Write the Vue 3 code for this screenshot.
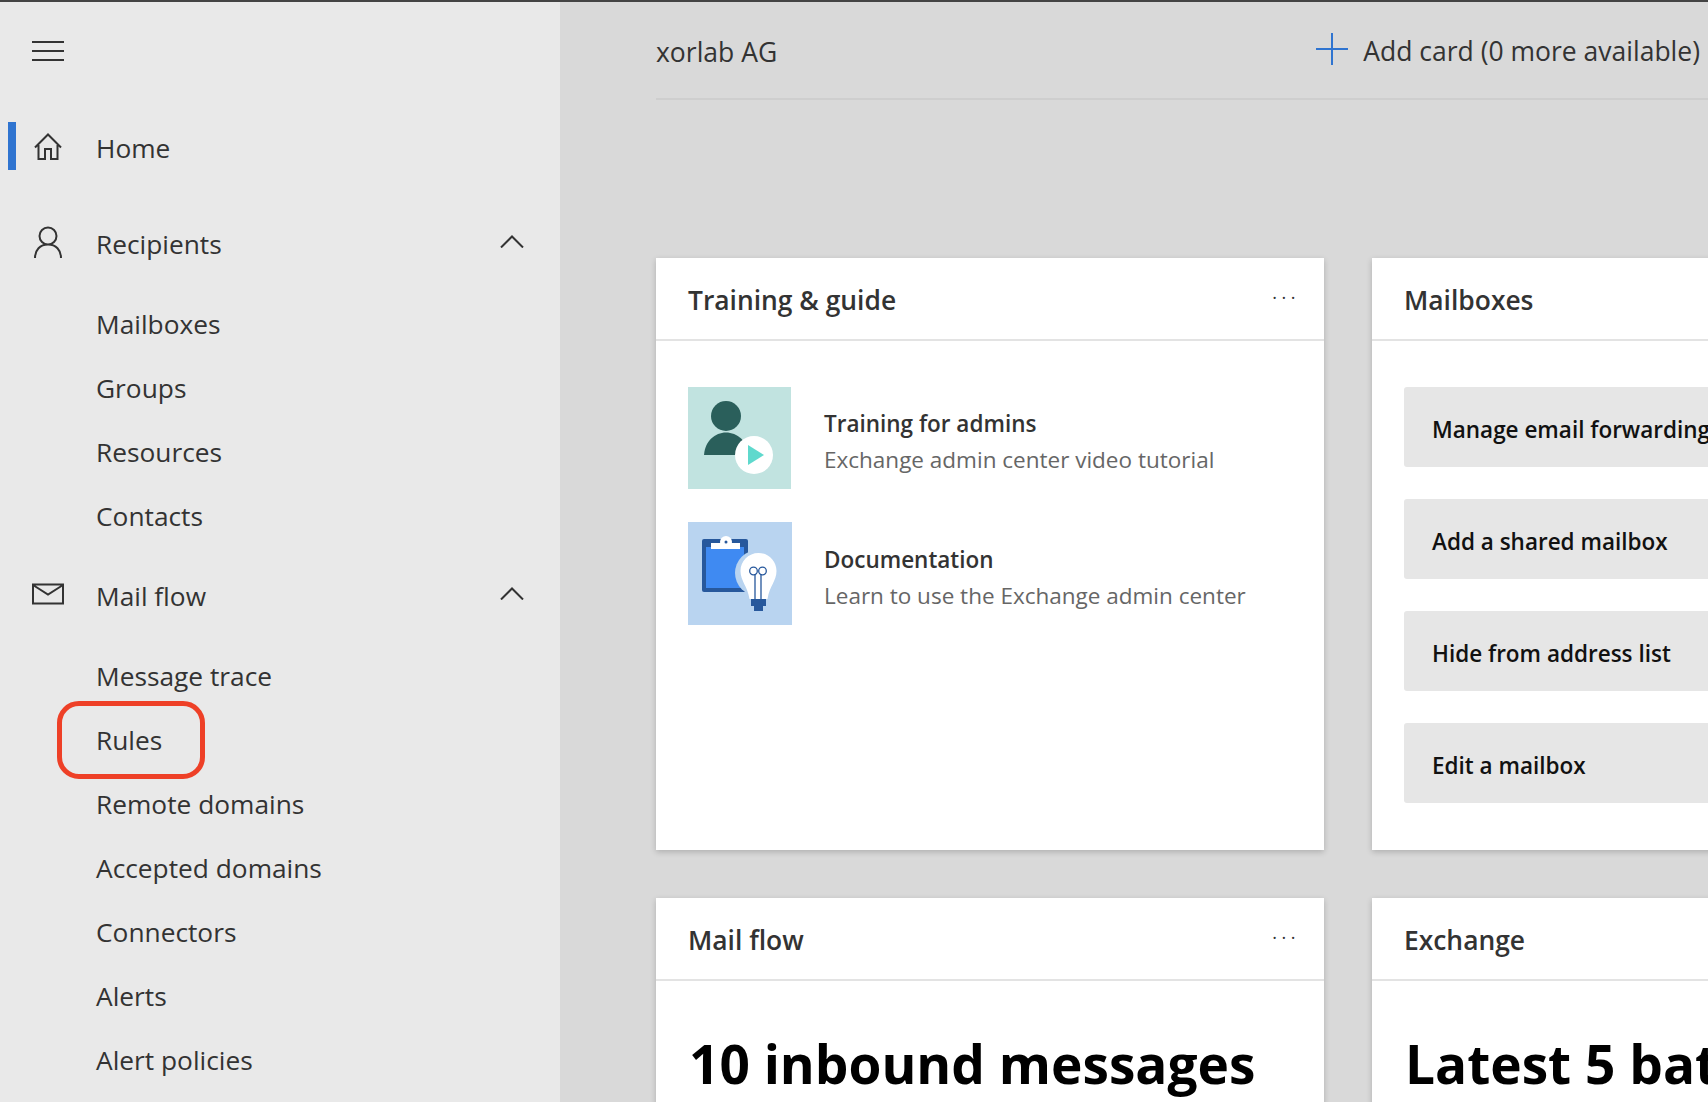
<template>
  <div class="page">
    <aside class="sidebar">
      <button class="hamburger" type="button" aria-label="Menu">
        <span /><span /><span />
      </button>

      <nav class="nav">
        <div v-for="group in navGroups" :key="group.label" class="nav-group">
          <div class="nav-head">
            <span class="nav-marker" :class="{ 'nav-marker--active': group.active }" />
            <svg class="nav-icon" viewBox="0 0 32 32" fill="none" stroke="#333" stroke-width="2">
              <path v-if="group.icon === 'home'" d="M3 17.5 16 4.500l13 13M6.500 15v14h6.500V19h6v10h6.500V15" />
              <path v-else-if="group.icon === 'person'" d="M16 18.500a8.500 8.500 0 1 0 0-17 8.500 8.500 0 0 0 0 17ZM3 32C3 24 8 18.500 16 18.500S29 24 29 32" />
              <path v-else d="M1 6.500h30v19H1zM1 7l15 9.500L31 7" />
            </svg>
            <span class="nav-label">{{ group.label }}</span>
            <svg v-if="group.items" class="nav-chevron" viewBox="0 0 24 13" fill="none" stroke="#333" stroke-width="2">
              <path d="M1 12.500 12 1.500l11 11" />
            </svg>
          </div>
          <div v-for="item in group.items" :key="item" class="nav-sub">
            {{ item }}
            <span v-if="item === 'Rules'" class="nav-highlight" />
          </div>
        </div>
      </nav>
    </aside>

    <main class="main">
      <header class="topbar">
        <span class="org">xorlab AG</span>
        <span class="add-card">
          <svg class="add-icon" viewBox="0 0 32 32" fill="none" stroke="#2f74d0" stroke-width="2">
            <path d="M16 0v32M0 16h32" />
          </svg>
          Add card (0 more available)
        </span>
      </header>

      <section class="cards">
        <article class="card">
          <div class="card-head">
            <h2>Training &amp; guide</h2>
            <span class="more">···</span>
          </div>
          <div class="card-body training">
            <div class="guide">
              <svg class="thumb" viewBox="0 0 103 102">
                <rect width="103" height="102" fill="#c1e3e0" />
                <circle cx="38" cy="29" r="15" fill="#2a5f5b" />
                <path d="M16 68c1-14 11-22.500 22-22.500S60 54 60 68Z" fill="#2a5f5b" />
                <circle cx="66" cy="68" r="19" fill="#fff" />
                <path d="M60 58v20l16-10Z" fill="#5fd9cd" />
              </svg>
              <div class="guide-text">
                <div class="guide-title">Training for admins</div>
                <div class="guide-sub">Exchange admin center video tutorial</div>
              </div>
            </div>
            <div class="guide">
              <svg class="thumb thumb--doc" viewBox="0 0 104 103">
                <rect width="104" height="103" fill="#b9d4f0" />
                <rect x="14" y="17" width="46" height="53" rx="2" fill="#27589c" />
                <rect x="18" y="25" width="38" height="41" fill="#3f8af2" />
                <circle cx="38" cy="20" r="6" fill="#fff" />
                <rect x="23" y="21" width="29" height="6" fill="#fff" />
                <circle cx="38" cy="20" r="1.500" fill="#27589c" />
                <circle cx="70" cy="51" r="23" fill="#b9d4f0" />
                <path d="M70.500 31c10 0 18 8 18 18 0 10-7 15-9 28h-18c-2-13-9-18-9-28 0-10 8-18 18-18Z" fill="#fff" />
                <path d="M67 77V52M73 77V52" fill="none" stroke="#27589c" stroke-width="1.300" />
                <circle cx="65.500" cy="49" r="3.800" fill="none" stroke="#27589c" stroke-width="1.300" />
                <circle cx="74.500" cy="49" r="3.800" fill="none" stroke="#27589c" stroke-width="1.300" />
                <path d="M63 77h15v7h-3v5h-9v-5h-3Z" fill="#27589c" />
              </svg>
              <div class="guide-text">
                <div class="guide-title">Documentation</div>
                <div class="guide-sub">Learn to use the Exchange admin center</div>
              </div>
            </div>
          </div>
        </article>

        <article class="card">
          <div class="card-head">
            <h2>Mailboxes</h2>
          </div>
          <div class="card-body actions">
            <div v-for="action in mailboxActions" :key="action" class="action">{{ action }}</div>
          </div>
        </article>

        <article class="card">
          <div class="card-head">
            <h2>Mail flow</h2>
            <span class="more">···</span>
          </div>
          <div class="card-body stat">10 inbound messages</div>
        </article>

        <article class="card">
          <div class="card-head">
            <h2>Exchange</h2>
          </div>
          <div class="card-body stat">Latest 5 batches</div>
        </article>
      </section>
    </main>
  </div>
</template>

<script setup>
const navGroups = [
  { label: "Home", icon: "home", active: true },
  { label: "Recipients", icon: "person", items: ["Mailboxes", "Groups", "Resources", "Contacts"] },
  {
    label: "Mail flow",
    icon: "mail",
    items: ["Message trace", "Rules", "Remote domains", "Accepted domains", "Connectors", "Alerts", "Alert policies"],
  },
]

const mailboxActions = [
  "Manage email forwarding",
  "Add a shared mailbox",
  "Hide from address list",
  "Edit a mailbox",
]
</script>

<style>
html, body {
  margin: 0;
  overflow: hidden;
}
</style>

<style scoped>
.page {
  display: flex;
  box-sizing: border-box;
  height: 1102px;
  overflow: hidden;
  border-top: 2px solid #444;
  background: #d9d9d9;
  color: #333;
  font-family: "Open Sans", "Noto Sans", sans-serif;
}

.sidebar {
  flex: 0 0 560px;
  background: #e9e9e9;
}
.hamburger {
  display: flex;
  flex-direction: column;
  gap: 7px;
  width: 32px;
  margin: 39px 0 0 32px;
  padding: 0;
  border: 0;
  background: none;
}
.hamburger span {
  height: 2px;
  background: #333;
}

.nav {
  margin-top: 53px;
}
.nav-group + .nav-group {
  margin-top: 16px;
}
.nav-group:first-child {
  margin-bottom: 32px;
}
.nav-head {
  display: flex;
  align-items: center;
  height: 64px;
  margin-bottom: 16px;
  padding: 0 36px 0 8px;
}
.nav-group:first-child .nav-head {
  margin-bottom: 0;
}
.nav-marker {
  width: 8px;
  height: 48px;
  margin-right: 16px;
}
.nav-marker--active {
  background: #2f74d0;
}
.nav-icon {
  width: 32px;
  height: 32px;
  margin-right: 32px;
  overflow: visible;
}
.nav-label {
  padding-top: 4px;
  font-size: 26.3px;
}
.nav-chevron {
  width: 24px;
  height: 13px;
  margin: -2px 0 0 auto;
}
.nav-sub {
  position: relative;
  box-sizing: border-box;
  height: 64px;
  padding: 2px 0 0 96px;
  font-size: 26.3px;
  line-height: 64px;
}
.nav-highlight {
  position: absolute;
  top: -5px;
  left: 57px;
  box-sizing: border-box;
  width: 148px;
  height: 78px;
  border: 5px solid #ee4027;
  border-radius: 22px;
}

.main {
  flex: 1;
  min-width: 0;
  padding-left: 96px;
}
.topbar {
  display: flex;
  align-items: center;
  justify-content: space-between;
  height: 96px;
  padding-right: 8px;
  border-bottom: 2px solid #cecece;
  font-size: 26.5px;
}
.org {
  padding-top: 4px;
}
.add-card {
  display: flex;
  align-items: center;
  gap: 15px;
  padding-top: 2px;
  white-space: nowrap;
}
.add-icon {
  width: 32px;
  height: 32px;
  margin-top: -4px;
}

.cards {
  display: grid;
  grid-template-columns: 668px 668px;
  gap: 48px;
  margin-top: 158px;
}
.card {
  height: 592px;
  background: #fff;
  box-shadow: 0 2px 6px rgba(0, 0, 0, 0.2);
}
.card-head {
  display: flex;
  align-items: center;
  justify-content: space-between;
  box-sizing: border-box;
  height: 83px;
  padding: 0 32px;
  border-bottom: 2px solid #e3e3e3;
}
.card-head h2 {
  margin: 0;
  padding-top: 3px;
  color: #333;
  font-size: 26.4px;
  font-weight: 600;
}
.more {
  margin: -4px -8px 0 0;
  font-size: 18px;
  letter-spacing: 4.5px;
  line-height: 1;
}
.card-body {
  padding: 46px 32px 0;
}

.guide {
  display: flex;
  align-items: center;
  margin-bottom: 33px;
}
.thumb {
  flex: none;
  width: 103px;
  height: 102px;
}
.thumb--doc {
  width: 104px;
  height: 103px;
  margin-right: -1px;
}
.guide-text {
  padding: 8px 0 0 33px;
}
.guide-title {
  font-size: 22.5px;
  font-weight: 600;
  line-height: 36px;
}
.guide-sub {
  color: #666;
  font-size: 22.5px;
  line-height: 36px;
}

.action {
  display: flex;
  align-items: center;
  box-sizing: border-box;
  width: 640px;
  height: 80px;
  margin-bottom: 32px;
  padding: 4px 0 0 28px;
  border-radius: 3px;
  background: #e6e6e6;
  color: #111;
  font-size: 22.5px;
  font-weight: 600;
  white-space: nowrap;
}

.stat {
  padding-left: 33px;
  color: #000;
  font-size: 53.2px;
  font-weight: 700;
  line-height: 74px;
  white-space: nowrap;
}
</style>
